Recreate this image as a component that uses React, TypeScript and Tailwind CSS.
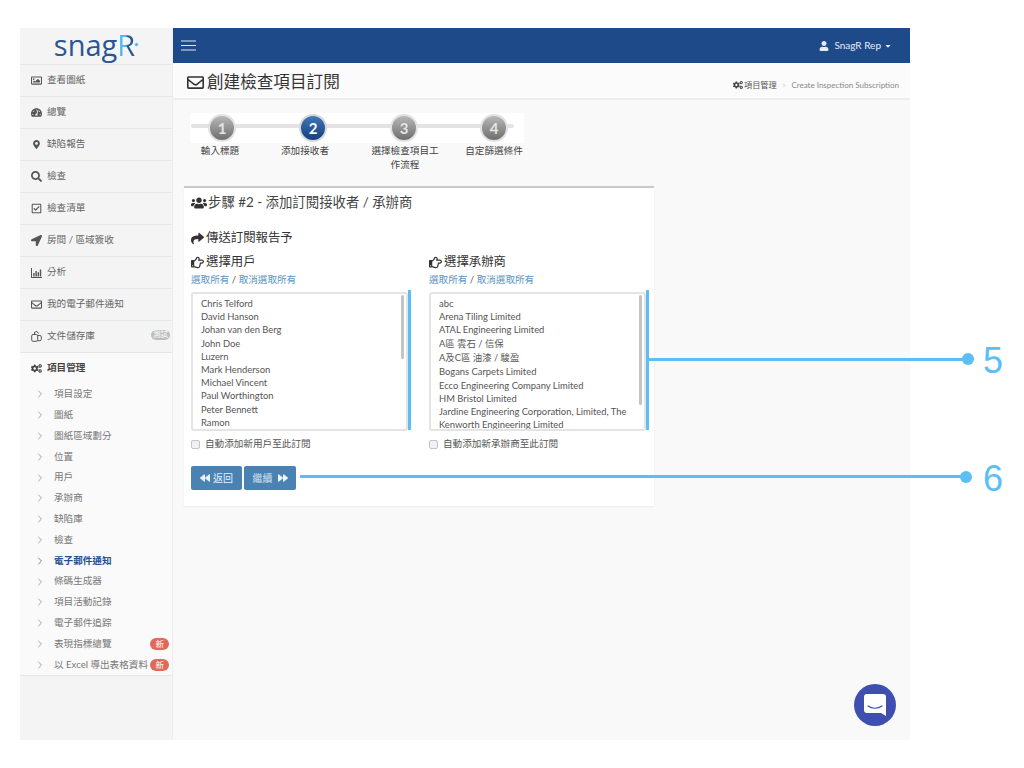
import {
  FaBackward,
  FaCaretDown,
  FaCogs,
  FaForward,
  FaLocationArrow,
  FaMapMarkerAlt,
  FaRegCheckSquare,
  FaRegEnvelope,
  FaRegHandPointRight,
  FaRegImage,
  FaSearch,
  FaShare,
  FaTachometerAlt,
  FaUser,
  FaUsers,
} from 'react-icons/fa'
import { ChevronRight } from 'lucide-react'
import type { ReactNode } from 'react'

const BarsIcon = () => (
  <svg width="11" height="10" viewBox="0 0 11 10" fill="currentColor">
    <path d="M0 0h1v9h10v1H0z" />
    <path d="M2.2 5h1.4v3.4H2.2zM4.4 3h1.4v5.4H4.4zM6.6 4.2H8v4.2H6.6zM8.8 1.6h1.4v6.8H8.8z" />
  </svg>
)

const FilesIcon = () => (
  <svg width="11" height="11" viewBox="0 0 11 11" fill="none" stroke="currentColor" strokeWidth="1">
    <path d="M3.5 3.5V2a1.3 1.3 0 0 1 1.3-1.3h1.4L7.7 2.6" />
    <rect x="0.7" y="3.5" width="6" height="6.8" rx="1.4" />
    <path d="M6.7 4.5h2.2a1.4 1.4 0 0 1 1.4 1.4v2.4a1.4 1.4 0 0 1-1.4 1.4H6.7" />
  </svg>
)

const MAIN_NAV: { label: string; icon: ReactNode; tag?: string }[] = [
  { label: '查看圖紙', icon: <FaRegImage /> },
  { label: '總覽', icon: <FaTachometerAlt /> },
  { label: '缺陷報告', icon: <FaMapMarkerAlt className="ml-[1px] text-[9px]" /> },
  { label: '檢查', icon: <FaSearch /> },
  { label: '檢查清單', icon: <FaRegCheckSquare /> },
  { label: '房間 / 區域簽收', icon: <FaLocationArrow /> },
  { label: '分析', icon: <BarsIcon /> },
  { label: '我的電子郵件通知', icon: <FaRegEnvelope /> },
  { label: '文件儲存庫', icon: <FilesIcon />, tag: '測試' },
]

const SUB_NAV: { label: string; active?: boolean; isNew?: boolean }[] = [
  { label: '項目設定' },
  { label: '圖紙' },
  { label: '圖紙區域劃分' },
  { label: '位置' },
  { label: '用戶' },
  { label: '承辦商' },
  { label: '缺陷庫' },
  { label: '檢查' },
  { label: '電子郵件通知', active: true },
  { label: '條碼生成器' },
  { label: '項目活動記錄' },
  { label: '電子郵件追踪' },
  { label: '表現指標總覽', isNew: true },
  { label: '以 Excel 導出表格資料', isNew: true },
]

const USERS = [
  'Chris Telford',
  'David Hanson',
  'Johan van den Berg',
  'John Doe',
  'Luzern',
  'Mark Henderson',
  'Michael Vincent',
  'Paul Worthington',
  'Peter Bennett',
  'Ramon',
]

const CONTRACTORS = [
  'abc',
  'Arena Tiling Limited',
  'ATAL Engineering Limited',
  'A區 雲石 / 信保',
  'A及C區 油漆 / 駿盈',
  'Bogans Carpets Limited',
  'Ecco Engineering Company Limited',
  'HM Bristol Limited',
  'Jardine Engineering Corporation, Limited, The',
  'Kenworth Engineering Limited',
]

const StepCircle = ({ n, active }: { n: number; active?: boolean }) => (
  <div
    className={
      active
        ? 'flex size-[28px] items-center justify-center rounded-full border-2 border-[#d8d8d8] bg-gradient-to-b from-[#3f78b8] to-[#173f7e] text-[15px] font-bold text-white'
        : 'flex size-[28px] items-center justify-center rounded-full border-2 border-[#e2e2e2] bg-gradient-to-b from-[#b8b8b8] to-[#6f6f6f] text-[15px] font-bold text-[#e4e4e4]'
    }
  >
    {n}
  </div>
)

const PickerColumn = ({
  title,
  items,
  autoLabel,
  thumbClass,
}: {
  title: string
  items: string[]
  autoLabel: string
  thumbClass: string
}) => (
  <div className="w-[219px]">
    <div className="flex h-[18px] items-center gap-[2px] text-[12.4px] text-[#333]">
      <FaRegHandPointRight className="text-[13px]" />
      <span>{title}</span>
    </div>
    <div className="mt-[2px] h-[14px] text-[9.6px] leading-[14px] text-[#5b94c2]">
      選取所有 <span className="text-[#555]">/</span> 取消選取所有
    </div>
    <div className="relative mt-[5px] h-[139px] w-[217px] overflow-hidden rounded-[3px] border-2 border-[#e4e4e4] bg-white pl-[8px] pt-[3px]">
      {items.map((item) => (
        <div
          key={item}
          className={
            item.includes('區')
              ? 'h-[14.4px] whitespace-nowrap text-[9.4px] leading-[14.4px] text-[#555]'
              : 'h-[13.2px] whitespace-nowrap text-[9.4px] leading-[13.2px] text-[#555]'
          }
        >
          {item}
        </div>
      ))}
      <div className={thumbClass} />
    </div>
    <label className="mt-[7px] flex h-[13px] items-center gap-[5px] text-[9.6px] text-[#555]">
      <span className="size-[9px] rounded-[2px] border border-[#c4c4c4] bg-[#f1f1f1]" />
      <span>{autoLabel}</span>
    </label>
  </div>
)

const App = () => (
  <div className="relative h-[768px] w-[1024px] overflow-hidden bg-white pl-[20px] pt-[28px] font-['Lato','Noto_Sans_CJK_TC',sans-serif]">
    <div className="flex h-[712px] w-[890px]">
      {/* Sidebar */}
      <aside className="flex w-[153px] shrink-0 flex-col border-r border-[#ededed] bg-[#f4f4f4]">
        <div className="relative flex h-[36px] items-center justify-center pb-[3px] font-['Open_Sans',sans-serif] text-[29px] leading-none text-[#2a5694]">
          <span>snag</span>
          <span className="bg-gradient-to-r from-[#55b8ea] from-50% to-[#2a5694] to-60% bg-clip-text text-transparent">R</span>
          <span className="mt-[-1px] size-[3px] rotate-45 bg-[#55b8ea]" />
        </div>
        {MAIN_NAV.map((item) => (
          <div
            key={item.label}
            className="flex h-[32px] items-center border-t border-[#e6e6e6] pl-[11px] pr-[2px] text-[9.6px] text-[#666]"
          >
            <span className="flex w-[16px] justify-start text-[11px] text-[#555]">{item.icon}</span>
            <span>{item.label}</span>
            {item.tag && (
              <span className="-mt-[3px] ml-auto rounded-full bg-[#bdbdbd] px-[2px] text-[7.5px] leading-[10px] text-white">
                {item.tag}
              </span>
            )}
          </div>
        ))}
        <div className="border-y border-[#e6e6e6] bg-[#fafafa]">
          <div className="flex h-[31px] items-center pl-[11px] text-[9.6px] font-bold text-[#444]">
            <span className="flex w-[16px] text-[11px]">
              <FaCogs />
            </span>
            <span>項目管理</span>
          </div>
          {SUB_NAV.map((item) => (
            <div
              key={item.label}
              className={
                item.active
                  ? 'flex h-[20.8px] items-center pl-[14px] pr-[3px] text-[9.6px] font-bold text-[#24508f]'
                  : 'flex h-[20.8px] items-center pl-[14px] pr-[3px] text-[9.6px] text-[#777]'
              }
            >
              <ChevronRight size={12} strokeWidth={1.3} className="mr-[8px] shrink-0" />
              <span className="whitespace-nowrap">{item.label}</span>
              {item.isNew && (
                <span className="ml-auto shrink-0 rounded-full bg-[#e2685a] px-[5px] text-[8.5px] leading-[12px] text-white">
                  新
                </span>
              )}
            </div>
          ))}
        </div>
      </aside>

      {/* Main column */}
      <div className="flex min-w-0 flex-1 flex-col bg-[#f9f9f9]">
        <header className="flex h-[35px] shrink-0 items-center justify-between bg-[#1f4a8a] pl-[8px] pr-[18px] text-white">
          <svg width="15" height="11" viewBox="0 0 15 11" stroke="#dfe7f2" strokeWidth="1">
            <path d="M0 1h15M0 5.5h15M0 10h15" />
          </svg>
          <div className="flex items-center text-[10px] text-[#e6ecf5]">
            <FaUser className="mr-[5px] text-[10px]" />
            <span>SnagR Rep</span>
            <FaCaretDown className="ml-[3px] text-[8px]" />
          </div>
        </header>

        <div className="flex h-[37px] shrink-0 items-center justify-between border-b-2 border-[#eeeeee] bg-[#fbfbfb] pl-[14px] pr-[11px]">
          <h1 className="mt-[3px] flex items-center gap-[3px] text-[16.6px] leading-none text-[#333]">
            <FaRegEnvelope className="text-[17px]" />
            創建檢查項目訂閱
          </h1>
          <div className="mt-[9px] flex items-center text-[8px] text-[#888]">
            <FaCogs className="mr-[1px] text-[10px] text-[#444]" />
            <span className="text-[8.2px] text-[#555]">項目管理</span>
            <span className="mx-[5px] text-[#ccc]">&gt;</span>
            <span>Create Inspection Subscription</span>
          </div>
        </div>

        {/* Wizard steps */}
        <div className="ml-[17px] mt-[13px] w-[334px]">
          <div className="relative flex h-[30px] items-center bg-white pl-[18px]">
            <div className="absolute left-[1px] right-[10px] top-[11px] h-[4px] rounded-full bg-[#e3e3e3]" />
            <div className="relative flex items-center gap-[63px]">
              <StepCircle n={1} />
              <StepCircle n={2} active />
              <StepCircle n={3} />
              <div className="-ml-[1px]">
                <StepCircle n={4} />
              </div>
            </div>
          </div>
          <div className="mt-[1px] grid grid-cols-[60px_90px_102px_82px] text-center text-[9.6px] leading-[14px] text-[#444]">
            <div>輸入標題</div>
            <div className="ml-[20px]">添加接收者</div>
            <div className="whitespace-nowrap pl-[28px]">
              選擇檢查項目工
              <br />
              作流程
            </div>
            <div className="whitespace-nowrap pl-[22px]">自定篩選條件</div>
          </div>
        </div>

        {/* Card */}
        <section className="ml-[11px] mt-[14px] h-[320px] w-[470px] border-t-2 border-[#c9c9c9] bg-white pl-[7px] pt-[6px] shadow-[0_1px_2px_rgba(0,0,0,0.06)]">
          <h2 className="flex h-[17px] items-center gap-[1px] text-[13.4px] text-[#444]">
            <FaUsers className="text-[16px] text-[#333]" />
            步驟 #2 - 添加訂閱接收者 / 承辦商
          </h2>
          <h3 className="mt-[19px] flex h-[17px] items-center gap-[2px] text-[12.4px] text-[#333]">
            <FaShare className="text-[13px]" />
            傳送訂閱報告予
          </h3>
          <div className="mt-[6px] flex gap-[19px]">
            <PickerColumn
              title="選擇用戶"
              items={USERS}
              autoLabel="自動添加新用戶至此訂閱"
              thumbClass="absolute right-[2px] top-[1px] h-[64px] w-[3px] rounded-full bg-[#c4c4c4]"
            />
            <PickerColumn
              title="選擇承辦商"
              items={CONTRACTORS}
              autoLabel="自動添加新承辦商至此訂閱"
              thumbClass="absolute right-[2px] top-[1px] h-[110px] w-[3px] rounded-full bg-[#c4c4c4]"
            />
          </div>
          <div className="mt-[15px] flex gap-[2px]">
            <button className="flex h-[24px] w-[51px] items-center justify-center gap-[3px] rounded-[2px] bg-[#4a82b4] text-[10px] text-[#e8f0f7]">
              <FaBackward className="text-[10px]" />
              返回
            </button>
            <button className="flex h-[24px] w-[52px] items-center justify-center gap-[5px] rounded-[2px] bg-[#4a82b4] text-[10px] text-[#d4e2ee]">
              繼續
              <FaForward className="text-[10px] text-[#eef4f9]" />
            </button>
          </div>
        </section>
      </div>
    </div>

    {/* Intercom launcher */}
    <div className="absolute left-[854px] top-[684px] flex size-[42px] items-center justify-center rounded-full bg-[#3f4fb0]">
      <svg width="22" height="22" viewBox="0 0 22 22">
        <path d="M3 0h16a3 3 0 0 1 3 3v19l-5-3H3a3 3 0 0 1-3-3V3a3 3 0 0 1 3-3z" fill="#fff" />
        <path d="M4 12c4 3 10 3 14 0" fill="none" stroke="#3f4fb0" strokeWidth="1.2" strokeLinecap="round" />
      </svg>
    </div>

    {/* Callouts */}
    <div className="absolute left-[408px] top-[290px] h-[140px] w-[3px] bg-[#5bbff5]" />
    <div className="absolute left-[646px] top-[290px] h-[140px] w-[3px] bg-[#5bbff5]" />
    <div className="absolute left-[649px] top-[358px] h-[3px] w-[318px] bg-[#5bbff5]" />
    <div className="absolute left-[962px] top-[353px] size-[12px] rounded-full bg-[#5bbff5]" />
    <div className="absolute left-[983px] top-[340px] font-['Liberation_Sans',sans-serif] text-[36px] leading-[42px] text-[#5bbff5]">5</div>
    <div className="absolute left-[300px] top-[475px] h-[3px] w-[665px] bg-[#5bbff5]" />
    <div className="absolute left-[960px] top-[471px] size-[12px] rounded-full bg-[#5bbff5]" />
    <div className="absolute left-[983px] top-[458px] font-['Liberation_Sans',sans-serif] text-[36px] leading-[42px] text-[#5bbff5]">6</div>
  </div>
)

export default App
